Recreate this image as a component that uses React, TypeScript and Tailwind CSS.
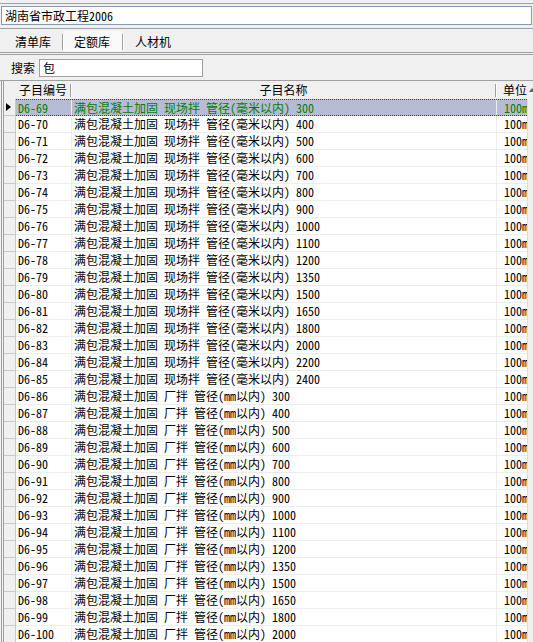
import React from "react";

type Row = { code: string; name: string; unit: string };

const buildRows = (): Row[] => {
  const sizes1 = [300, 400, 500, 600, 700, 800, 900, 1000, 1100, 1200, 1350, 1500, 1650, 1800, 2000, 2200, 2400];
  const sizes2 = [300, 400, 500, 600, 700, 800, 900, 1000, 1100, 1200, 1350, 1500, 1650, 1800, 2000];
  const rows: Row[] = [];
  sizes1.forEach((s, i) => {
    rows.push({ code: `D6-${69 + i}`, name: `满包混凝土加固 现场拌 管径(毫米以内) ${s}`, unit: "100m" });
  });
  sizes2.forEach((s, i) => {
    rows.push({ code: `D6-${86 + i}`, name: `满包混凝土加固 厂拌 管径(mm以内) ${s}`, unit: "100m" });
  });
  return rows;
};

const rows = buildRows();

const HeaderSep = () => (
  <div className="flex h-[13px] w-[2px] shrink-0">
    <div className="w-[1px] bg-[#a0a0a0]" />
    <div className="w-[1px] bg-white" />
  </div>
);

export default function App() {
  return (
    <div className="w-[533px] h-[642px] overflow-hidden bg-[#f0f0f0] flex flex-col text-[12px] leading-none text-black font-[family-name:'Noto_Sans_Mono_CJK_SC','Noto_Sans_CJK_SC',sans-serif]">
      {/* top strip */}
      <div className="h-[4px] shrink-0 border-b border-[#a0a0a0]" />
      <div className="px-[1px] pt-[2px] shrink-0">
        <div className="h-[19px] border border-[#7f9db9] bg-white pl-[3px] flex items-center">湖南省市政工程2006</div>
      </div>

      {/* tabs */}
      <div className="mt-[3px] shrink-0 border-t border-[#a0a0a0] h-[24px] flex items-end">
        <div className="h-[21px] w-[62px] flex items-center pl-[15px]">清单库</div>
        <div className="h-[21px] flex items-center">
          <div className="w-[1px] h-[16px] bg-[#a0a0a0]" />
          <div className="w-[1px] h-[16px] bg-white" />
        </div>
        <div className="h-[21px] w-[58px] bg-[#f9f9f9] flex items-center pl-[10px]">定额库</div>
        <div className="h-[21px] flex items-center">
          <div className="w-[1px] h-[16px] bg-[#a0a0a0]" />
          <div className="w-[1px] h-[16px] bg-white" />
        </div>
        <div className="h-[21px] flex items-center pl-[11px]">人材机</div>
      </div>
      <div className="h-[3px] shrink-0 border-t border-b border-[#a0a0a0]" />

      {/* search */}
      <div className="h-[25px] shrink-0 flex items-center pl-[11px]">
        <span className="w-[28px]">搜索</span>
        <div className="h-[18px] w-[164px] border border-[#a0a0a0] bg-white flex items-center pl-[3px]">包</div>
      </div>

      {/* grid */}
      <div className="flex-1 min-h-0 border-t border-[#a0a0a0] flex">
        <div className="flex-1 min-w-0 ml-[1px] border-l border-[#a0a0a0] pl-[1px] flex flex-col">
          <div className="flex-1 border-l border-[#a0a0a0] flex flex-col overflow-hidden">
            {/* header */}
            <div className="h-[18px] shrink-0 flex items-center">
              <div className="w-[12px] shrink-0" />
              <div className="w-[54px] shrink-0 flex justify-center">子目编号</div>
              <HeaderSep />
              <div className="w-[423px] shrink-0 flex justify-center">子目名称</div>
              <HeaderSep />
              <div className="flex-1 pl-[6px] overflow-hidden whitespace-nowrap">单位</div>
            </div>
            {rows.map((r, i) => {
              const sel = i === 0;
              return (
                <div key={r.code} className="h-[17px] shrink-0 flex">
                  <div className="w-[12px] shrink-0 bg-[#f0f0f0] border-r border-b border-[#c8c8c8] flex items-center pl-[2px]">
                    {sel && <div className="w-0 h-0 border-y-[4px] border-y-transparent border-l-[5px] border-l-black" />}
                  </div>
                  <div
                    className={`flex-1 flex min-w-0 ${
                      sel
                        ? "bg-[#b7bcd4] text-[#008000] border-y border-dotted border-[#404040]"
                        : "bg-white border-b border-[#ededed]"
                    }`}
                  >
                    <div className="w-[56px] shrink-0 border-r border-[#ededed] flex items-center pl-[2px] whitespace-nowrap">
                      {r.code}
                    </div>
                    <div className="w-[425px] shrink-0 border-r border-[#ededed] flex items-center pl-[2px] whitespace-nowrap overflow-hidden">
                      {r.name}
                    </div>
                    <div className="flex-1 min-w-0 flex items-center pl-[7px] whitespace-nowrap overflow-hidden">
                      {r.unit}
                    </div>
                  </div>
                </div>
              );
            })}
          </div>
        </div>
        {/* scrollbar */}
        <div className="w-[6px] shrink-0 flex flex-col">
          <div className="h-[18px] flex items-center pl-[2px]">
            <div className="w-0 h-0 border-x-[3px] border-x-transparent border-b-[4px] border-b-[#606060]" />
          </div>
          <div className="flex-1 border-l border-[#dcdcdc] bg-[#f0f0f0]" />
        </div>
      </div>
    </div>
  );
}
